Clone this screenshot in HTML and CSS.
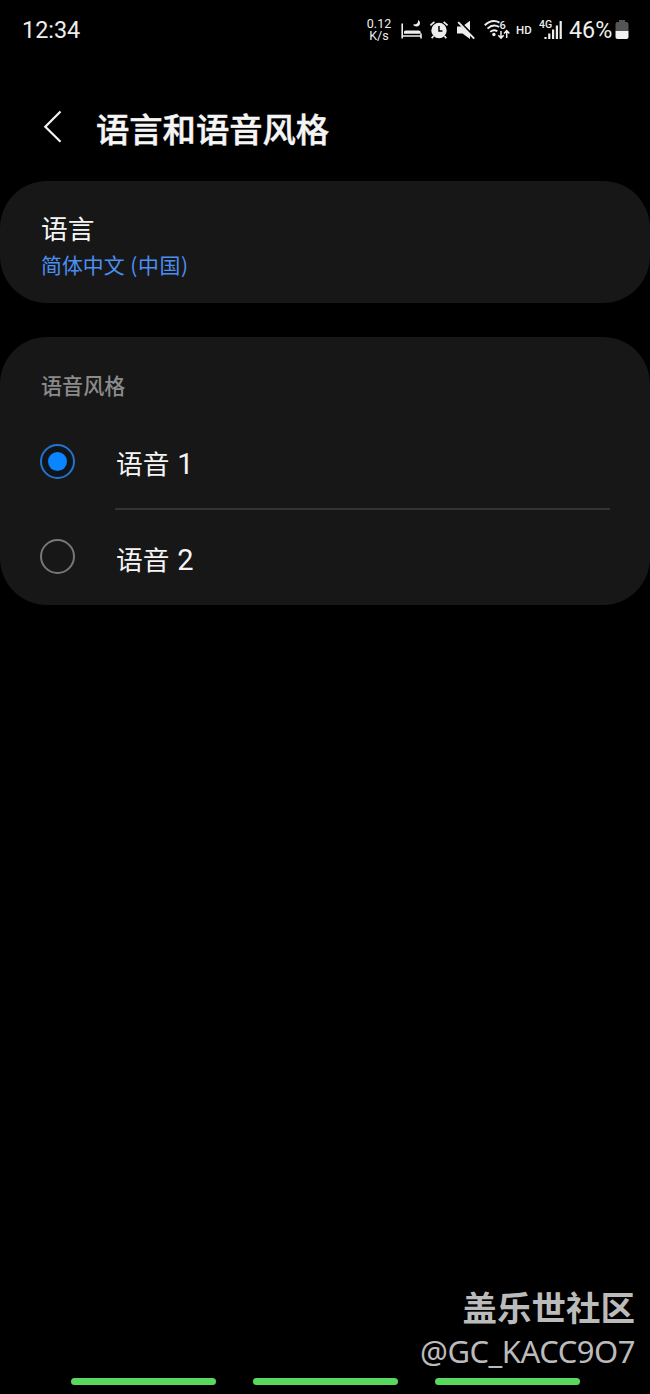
FILE: index.html
```html
<!DOCTYPE html>
<html lang="zh-CN">
<head>
<meta charset="utf-8">
<title>语言和语音风格</title>
<link rel="stylesheet" href="styles.css">
</head>
<body>
<div class="screen">
  <header class="status">
    <span class="clock">12:34</span>
    <div class="speed"><span>0.12</span><span>K/s</span></div>
    <svg class="ic bed" width="22" height="22" viewBox="0 0 22 22"><path d="M1.200 4.500v15M1 17h19.500M20 19.500v-5" fill="none" stroke="#eee" stroke-width="1.600"/><path d="M3 14.800V13q0-1.500 1.500-1.500h13q2.300 0 2.300 2.300v1z" fill="#eee"/><path d="M17 1q.8 4.600-5 4.600q1 1.900 3.400 1.900q3.600-.3 3.600-3.500q0-2-2-3z" fill="#eee"/></svg>
    <svg class="ic alarm" width="20" height="20" viewBox="0 0 20 20"><path d="M1.400 5.300l4-3.500M18.600 5.300l-4-3.500M4.500 16l-1.800 2.200M15.500 16l1.800 2.200" stroke="#eee" stroke-width="1.700" fill="none"/><circle cx="10" cy="10.500" r="7.700" fill="#eee"/><path d="M10 6v5h3.400" fill="none" stroke="#000" stroke-width="1.500"/></svg>
    <svg class="ic mute" width="20" height="20" viewBox="0 0 20 20"><path d="M1 6.500h4.500L14 14.200V19L6.500 13.500H1zM8.300 5L14 .8v10z" fill="#eee"/><path d="M2.200 2.200l16 16.500" stroke="#eee" stroke-width="1.900"/></svg>
    <svg class="ic wifi" width="26" height="22" viewBox="0 0 26 22"><g fill="none" stroke="#eee" stroke-width="1.900"><path d="M.8 6.300Q7.800-.5 15.500 3.600M3.500 9.600Q9 4.400 15.200 8M6.300 12.900Q9.800 9.800 13.300 12.300"/></g><circle cx="9.900" cy="15.500" r="1.700" fill="#eee"/><path d="M17 12v7M14.300 16.300l2.700 2.800 2.700-2.800M22.700 19v-7M20 14.500l2.700-2.800 2.700 2.800" fill="none" stroke="#eee" stroke-width="1.500"/><text x="15.500" y="9.500" class="six">6</text></svg>
    <span class="hd">HD</span>
    <svg class="ic signal" width="24" height="22" viewBox="0 0 24 22"><text x="0" y="9" class="g4">4G</text><path d="M6.500 18v2M10.300 14.500V20M14.100 10.500V20M17.900 6.500V20M21.700 2V20" stroke="#eee" stroke-width="2.200"/></svg>
    <span class="pct">46%</span>
    <svg class="ic batt" width="14" height="20" viewBox="0 0 14 20"><path d="M4 0h6v2h1.500Q13.500 2 13.500 4v7H.5V4q0-2 2-2H4z" fill="#555"/><path d="M.5 11h13v6q0 2-2 2h-9q-2 0-2-2z" fill="#f2f2f2"/></svg>
  </header>
  <div class="titlebar">
    <svg width="20" height="34" viewBox="0 0 20 34"><path d="M17.500 1.500L2.300 16.700L17.500 31.800" fill="none" stroke="#f4f4f4" stroke-width="2.200"/></svg>
    <h1>语言和语音风格</h1>
  </div>
  <section class="card language">
    <div class="name">语言</div>
    <div class="value">简体中文 <span>(中国)</span></div>
  </section>
  <section class="card voices">
    <h2>语音风格</h2>
    <div class="option"><span class="radio on"></span><span class="text">语音 <b>1</b></span></div>
    <div class="line"></div>
    <div class="option second"><span class="radio"></span><span class="text">语音 <b>2</b></span></div>
  </section>
  <footer>
    <div class="community">盖乐世社区</div>
    <div class="user">@GC_KACC9O7</div>
    <div class="nav"><i></i><i></i><i></i></div>
  </footer>
</div>
</body>
</html>
```
FILE: styles.css
```css
* { box-sizing: border-box; }
body { margin: 0; background: #000; color: #f5f5f5; font-family: "Noto Sans CJK SC", sans-serif; }
.screen { width: 650px; height: 1394px; display: flex; flex-direction: column; overflow: hidden; }
.status { height: 60px; display: flex; align-items: center; padding-right: 21px; font-family: Roboto, sans-serif; color: #eee; flex: none; }
.status > * { flex: none; }
.clock { font-size: 23.400px; margin-left: 22px; width: 344px; }
.speed { width: 26px; font-size: 12.500px; line-height: 12px; display: flex; flex-direction: column; align-items: center; }
.bed { margin-left: 9px; }
.alarm { margin-left: 6px; }
.mute { margin-left: 7px; }
.wifi { margin-left: 8px; }
.six { font: 500 11px Roboto, sans-serif; fill: #eee; }
.hd { font-size: 11.500px; font-weight: 500; width: 17px; margin-left: 6px; margin-top: -1px; }
.signal { margin-left: 6px; }
.g4 { font: 500 10.500px Roboto, sans-serif; fill: #eee; }
.pct { font-size: 23.300px; margin-left: 6px; width: 43px; white-space: nowrap; }
.batt { margin-left: 3px; }
.titlebar { height: 121px; flex: none; display: flex; padding: 50px 0 0 43px; }
.titlebar h1 { margin: -4px 0 0 33px; font-size: 33.300px; line-height: 44px; font-weight: 500; -webkit-text-stroke: .5px #f5f5f5; }
.card { background: #171717; border-radius: 47px; flex: none; }
.language { height: 122px; padding: 28px 41px 0; }
.name { font-size: 26.700px; line-height: 38px; }
.value { font-size: 20.900px; line-height: 32px; color: #4b8ff2; margin-top: 1px; }
.value span { margin-left: 1px; letter-spacing: .6px; }
.voices { margin-top: 34px; height: 268px; padding: 32px 40px 0; }
.voices h2 { margin: 0 0 0 1px; font-size: 21.100px; line-height: 32px; font-weight: 500; color: #8b8b8b; }
.option { height: 36px; margin-top: 42px; display: flex; align-items: center; }
.radio { width: 35px; height: 35px; border: 2px solid #777; border-radius: 50%; display: grid; place-items: center; }
.radio.on { border-color: #2573cb; background: #10151c; }
.radio.on::after { content: ""; width: 19px; height: 19px; border-radius: 50%; background: #0a84ff; }
.text { font-size: 26.700px; line-height: 36px; margin: 3px 0 0 41px; }
.text b { font: 400 29px/30px Roboto, sans-serif; margin-left: 2px; }
.line { height: 2px; margin: 29px 0 0 75px; background: #333; }
.second { margin-top: 29px; }
.second .radio { margin-top: -2px; }
footer { margin-top: auto; display: flex; flex-direction: column; color: #bbb; align-items: flex-end; }
.community { font-size: 34.500px; line-height: 44px; font-weight: 700; margin-right: 15px; }
.user { font: 400 31px/46px "Noto Sans", sans-serif; letter-spacing: -.5px; margin-right: 15px; }
.nav { width: 650px; height: 20px; display: flex; gap: 37px; padding: 4px 0 0 71px; }
.nav i { width: 145px; height: 7px; border-radius: 4px; background: #58d85d; }
```
